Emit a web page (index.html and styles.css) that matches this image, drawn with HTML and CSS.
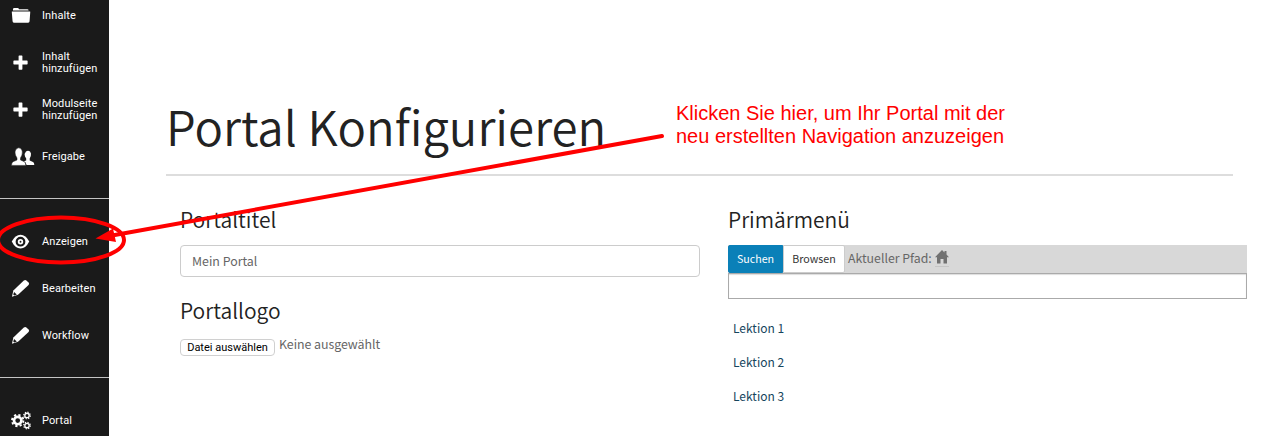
FILE: index.html
```
<!DOCTYPE html>
<html lang="de">
<head>
<meta charset="utf-8">
<title>Portal Konfigurieren</title>
<link rel="stylesheet" href="styles.css">
</head>
<body>
<svg class="defs" width="0" height="0">
  <symbol id="pencil" viewBox="0 0 20 20">
    <path fill="#fff" d="M2.500 12.200 13.500 1.600Q15 .5 16.200 1.500L18.500 3.600Q19.700 5 18.500 6.400L7.400 16.600 1 18.800Z"/>
    <path fill="#1a1a1a" d="M3.200 13.700 6.100 16.200 3.300 17.300 2.400 16.300Z"/>
  </symbol>
  <symbol id="plus" viewBox="0 0 20 20">
    <path fill="#fff" d="M8.700 2.500h2.600q.7 0 .7.7V8h4.800q.7 0 .7.7v2.600q0 .7-.7.7H12v4.800q0 .7-.7.7H8.700q-.7 0-.7-.7V12H3.200q-.7 0-.7-.7V8.700q0-.7.7-.7H8V3.200q0-.7.7-.7z"/>
  </symbol>
</svg>
<div class="page">
  <nav class="sidebar">
    <ul class="group first">
      <li class="item"><svg class="icon" viewBox="0 0 22 20"><path fill="#fff" d="M2 4.700V3.500Q2 2 3.500 2H7Q8 2 8.400 3.500H17Q18.500 3.500 18.500 4.700ZM1 5.900H20Q20.300 5.900 20.200 6.500L19.500 16Q19.400 17.500 18 17.500H3Q1.700 17.500 1.600 16L.8 6.500Q.7 5.900 1 5.900Z"/></svg><span>Inhalte</span></li>
      <li class="item"><svg class="icon small"><use href="#plus"/></svg><span>Inhalt<br>hinzufügen</span></li>
      <li class="item"><svg class="icon small"><use href="#plus"/></svg><span>Modulseite<br>hinzufügen</span></li>
      <li class="item"><svg class="icon wide" viewBox="0 0 24 20"><path fill="#fff" d="M15 4.500Q17 3 19 4.500 20.600 6 19.800 9L18.700 11.500V13.500L22 15Q23.300 15.500 23.300 18H15.500Q15.200 15.500 13 14.300L15.200 13.500V11.500L14 9.500Q13.200 6 15 4.500Z"/><path fill="#fff" stroke="#1a1a1a" stroke-width=".5" d="M5 2.200Q7.800-.6 10.500 2.200 12 4.500 10.900 8.200L9.500 11V13L13 14.500Q14.800 15.400 14.800 18.400H.5Q.3 15.400 2.500 14.500L6 13V11L4.500 8.200Q3.300 4.500 5 2.200Z"/></svg><span>Freigabe</span></li>
    </ul>
    <ul class="group lower">
      <li class="item"><svg class="icon small" viewBox="0 0 20 20"><path fill="#fff" d="M.8 10Q4.500 3 10 3T19.200 10Q15.500 17.400 10 17.400T.8 10Z"/><circle cx="10" cy="10.200" r="4" fill="#fff" stroke="#1a1a1a" stroke-width="2.300"/><circle cx="10" cy="10.200" r="1" fill="#1a1a1a"/></svg><span>Anzeigen</span></li>
      <li class="item"><svg class="icon small"><use href="#pencil"/></svg><span>Bearbeiten</span></li>
      <li class="item"><svg class="icon small"><use href="#pencil"/></svg><span>Workflow</span></li>
    </ul>
    <ul class="group lower">
      <li class="item"><svg class="icon" viewBox="0 0 22 20"><g fill="none" stroke="#fff"><circle cx="7" cy="10" r="3.900" stroke-width="2.800"/><circle cx="7" cy="10" r="6" stroke-width="2" stroke-dasharray="2.360 2.352"/><circle cx="16.800" cy="4.700" r="2.300" stroke-width="1.400"/><circle cx="16.800" cy="4.700" r="3.500" stroke-width="1.200" stroke-dasharray="1.370 1.379"/><circle cx="16.800" cy="15.300" r="2.300" stroke-width="1.400"/><circle cx="16.800" cy="15.300" r="3.500" stroke-width="1.200" stroke-dasharray="1.370 1.379"/></g></svg><span>Portal</span></li>
    </ul>
  </nav>
  <main class="content">
    <h1 class="title">Portal Konfigurieren</h1>
    <div class="columns">
      <section class="column">
        <h2 class="heading">Portaltitel</h2>
        <div class="field">Mein Portal</div>
        <h2 class="heading logo">Portallogo</h2>
        <div class="upload"><button class="file">Datei auswählen</button><span class="hint">Keine ausgewählt</span></div>
      </section>
      <section class="column">
        <h2 class="heading">Primärmenü</h2>
        <div class="pathbar">
          <div class="tab active">Suchen</div><div class="tab">Browsen</div>
          <span class="path">Aktueller Pfad:</span>
          <span class="home"><svg width="14" height="14" viewBox="0 0 14 14"><path fill="#717171" d="M7 0 9.500 2.500V1H11.500V4.500L14 7.200H12V13.500H8.500V9H5.500V13.500H2V7.200H0Z"/></svg></span>
        </div>
        <div class="search"></div>
        <ul class="lessons"><li>Lektion 1</li><li>Lektion 2</li><li>Lektion 3</li></ul>
      </section>
    </div>
  </main>
  <svg class="annotation" width="1283" height="436" viewBox="0 0 1283 436">
    <ellipse cx="61" cy="240" rx="63" ry="22.500" fill="none" stroke="#f00" stroke-width="4"/>
    <path d="M662 136 112 235.500" stroke="#f00" stroke-width="4" stroke-linecap="round"/>
    <path d="M95.500 238.500 113 228.500 116 242Z" fill="#f00"/>
  </svg>
  <p class="note">Klicken Sie hier, um Ihr Portal mit der<br>neu erstellten Navigation anzuzeigen</p>
</div>
</body>
</html>
```
FILE: styles.css
```
* { box-sizing: border-box; }
body { margin: 0; background: #fff; font-family: "Noto Sans CJK SC", "Open Sans", sans-serif; }
h1, h2, ul, p { margin: 0; padding: 0; font-weight: 400; }
ul { list-style: none; }
.defs { position: absolute; }
.page { position: relative; display: flex; width: 1283px; height: 436px; overflow: hidden; }
.sidebar { width: 109px; height: 436px; overflow: hidden; background: #1a1a1a; color: #fff; font: 11px/12px Roboto, sans-serif; letter-spacing: .1px; }
.group { padding: 18px 0; border-bottom: 1px solid #c4c4c4; }
.group.lower { padding: 19px 0 18px; }
.first { margin-top: -26px; }
.item { display: flex; align-items: center; height: 47px; padding-left: 11px; white-space: nowrap; }
.item span { width: 66px; flex: none; padding-top: 1px; }
.icon { width: 21px; height: 19px; margin-right: 10px; flex: none; }
.small { width: 19px; height: 19px; margin-right: 12px; }
.wide { width: 24px; height: 20px; margin-right: 7px; }
.content { flex: 1; padding: 94px 36px 0 57px; }
.title { width: 1067px; height: 82px; border-bottom: 2px solid #ddd; color: #222; font-size: 47.400px; font-weight: 350; line-height: 64px; white-space: nowrap; }
.columns { display: grid; grid-template-columns: 520px 519px; gap: 28px; padding: 28px 0 0 14px; }
.heading { height: 41px; color: #222; font-size: 21px; font-weight: 350; line-height: 30px; white-space: nowrap; }
.field { height: 32px; padding: 0 11px; border: 1px solid #ccc; border-radius: 4px; color: #666; font-size: 12.400px; line-height: 30px; }
.logo { margin-top: 18px; height: 43px; }
.upload { display: flex; align-items: flex-start; gap: 4px; }
.file { width: 95px; height: 17px; margin-top: 1px; padding: 0; border: 1px solid #d0d0d0; border-radius: 4px; background: #fff; color: #000; font: 11px/16px Roboto, sans-serif; }
.hint { margin-top: -4px; color: #666; font-size: 12.400px; letter-spacing: -.05px; line-height: 20px; }
.pathbar { display: flex; height: 28px; background: #d8d8d8; }
.tab { width: 62px; border: 1px solid #ccc; border-radius: 0 2px 2px 0; background: #fff; color: #333; font-size: 10.700px; line-height: 26px; text-align: center; }
.active { width: 55px; border-color: #0a80b8; border-radius: 2px 0 0 2px; background: #0a80b8; color: #fff; }
.path { margin-left: 3px; color: #666; font-size: 12.300px; line-height: 26px; }
.home { margin-left: 3px; padding-top: 5px; height: 22px; border-bottom: 1px solid #c5c5c5; line-height: 0; }
.search { height: 26px; border: 1px solid #aaa; box-shadow: inset 0 1px 1px #ddd; }
.lessons { padding: 12px 0 0 5px; color: #16455d; font-size: 12px; line-height: 34px; }
.annotation { position: absolute; left: 0; top: 0; }
.note { position: absolute; left: 676px; top: 102px; color: #f00; font: 20px/23px "Liberation Sans", Arial, sans-serif; white-space: nowrap; }
```
